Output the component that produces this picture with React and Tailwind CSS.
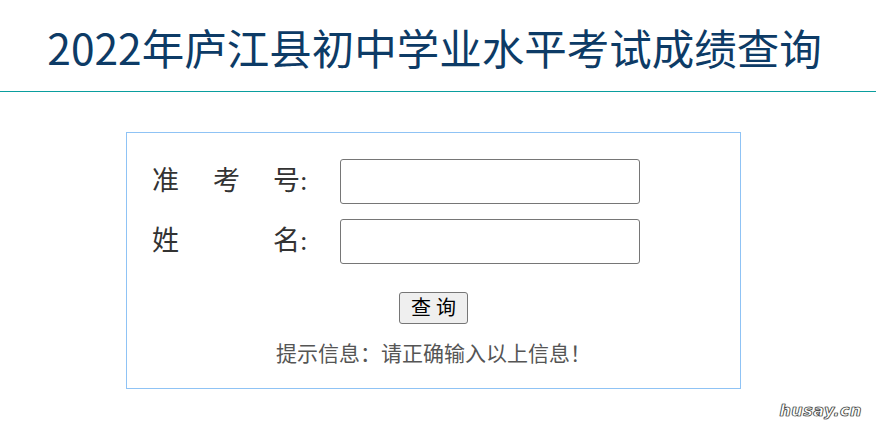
import React from 'react';

const serif = { fontFamily: '"Liberation Serif", "Noto Sans CJK SC", serif' };

function Field({ label }) {
  return (
    <div className="flex items-center">
      <div className="w-[188px] text-[27px] text-[#333] leading-none flex" style={serif}>
        {label}
      </div>
      <input
        type="text"
        className="w-[300px] h-[45px] border border-[#767676] rounded-[3px] bg-white outline-none"
      />
    </div>
  );
}

export default function App() {
  return (
    <div className="w-[876px] h-[430px] bg-white relative overflow-hidden">
      <div className="h-[91px] flex items-center justify-center">
        <h1
          className="text-[42.5px] text-[#0d3b66] leading-none pt-[4px] -ml-[7px]"
          style={{ fontFamily: '"Noto Sans CJK SC", "Open Sans", sans-serif' }}
        >
          2022年庐江县初中学业水平考试成绩查询
        </h1>
      </div>
      <div className="h-[1px] bg-[#0a9e9e]" />

      <div className="mt-[40px] ml-[126px] w-[615px] h-[257px] border border-[#8fc3f5] pl-[25px] pt-[26px]">
        <div className="flex flex-col gap-[15px]">
          <Field
            label={
              <>
                <span className="w-[61px]">准</span>
                <span className="w-[60px]">考</span>
                <span>号:</span>
              </>
            }
          />
          <Field
            label={
              <>
                <span className="w-[121px]">姓</span>
                <span>名:</span>
              </>
            }
          />
        </div>
        <div className="flex justify-center mt-[28px] -ml-[25px]">
          <button
            className="w-[69px] h-[32px] bg-[#efefef] border border-[#767676] rounded-[3px] text-[20px] text-black leading-none"
            style={serif}
          >
            查 询
          </button>
        </div>
        <p
          className="text-center -ml-[25px] mt-[20px] text-[21px] text-[#555] leading-none"
          style={serif}
        >
          提示信息：请正确输入以上信息！
        </p>
      </div>

      <div
        className="absolute right-[14px] bottom-[11px] text-[16px] font-bold italic text-white leading-none tracking-[0.5px]"
        style={{
          fontFamily: '"DejaVu Sans", sans-serif',
          WebkitTextStroke: '0.6px #333',
          textShadow: '0 0 1px #000',
        }}
      >
        husay.cn
      </div>
    </div>
  );
}
